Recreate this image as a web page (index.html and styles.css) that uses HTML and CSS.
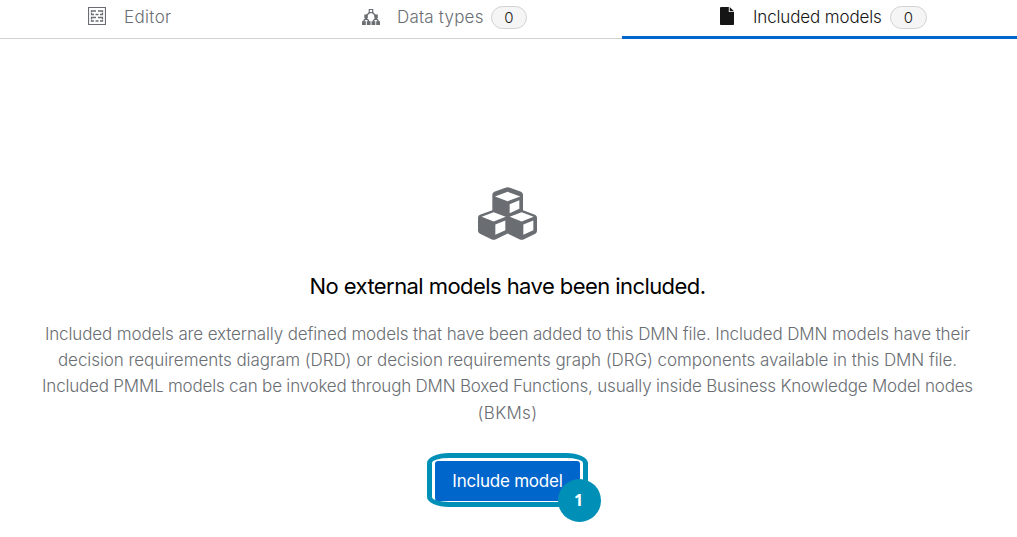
FILE: index.html
```html
<!DOCTYPE html>
<html lang="en">
<head>
<meta charset="utf-8">
<title>Included models</title>
<link rel="stylesheet" href="styles.css">
</head>
<body>
<nav class="tabs">
  <a class="tab tab-editor">
    <svg class="icon" width="18" height="18" viewBox="0 0 18 18" fill="none" stroke="#6a6e73"><path d="M.5.5h17v17H.5z" stroke-width="1.2"/><path d="M3.500 5.500v-1.500H8M10 4h4.500v1.500M3.500 6v1.500H6M7.500 7.500h3M12 7.500h2.500V6M3.500 12v-1.500H8M10 10.500h4.500V12M3.500 12.500V14H6M7.500 14h3M12 14h2.500v-1.500" stroke-width="1.300"/></svg>
    <span class="label">Editor</span>
  </a>
  <a class="tab tab-types">
    <svg class="icon" width="18" height="16" viewBox="0 0 18 16"><path d="M7.500 3.500 4 7v2M10.500 3.500 14 7v2M2 13v-1.500L4 9l2.500 2.500V13M11.500 13v-1.500L14 9l2 2.500V13" fill="none" stroke="#6a6e73" stroke-width="1.400"/><path d="M7.300.5h3.400v3.200H7.300z" fill="#fff" stroke="#6a6e73" stroke-width="1.200"/><path d="M2.300 5.500h3.500v3.500H2.300zM12.300 5.500h3.500v3.500h-3.500zM0 12.200h3.800V16H0zM4.800 12.200h3.800V16H4.800zM9.500 12.200h3.800V16H9.500zM14.200 12.200H18V16h-3.800z" fill="#6a6e73"/></svg>
    <span class="label">Data types</span><span class="badge">0</span>
  </a>
  <a class="tab tab-models">
    <svg class="icon" width="14" height="18" viewBox="0 0 14 18" fill="#151515"><path d="M1 0h7.800v5H14v12.200a.8.8 0 0 1-.8.8H.8a.8.8 0 0 1-.8-.8V1a1 1 0 0 1 1-1zM9.700 0 14 4.200H9.700z"/></svg>
    <span class="label">Included models</span><span class="badge">0</span>
  </a>
</nav>
<main class="empty">
  <svg class="cubes" width="59" height="53" viewBox="39 37 177 158"><path fill="#6a6e73" d="M121 39q7-3 14 0l33 12q6 3 6 9v46l36 14q6 3 6 8v40q0 6-5 9l-34 16q-7 3-14 0l-35-17-35 17q-7 3-14 0l-34-16q-6-3-6-9v-40q0-6 6-8l37-14V60q0-6 6-9z"/><path fill="#fff" d="m90 65 38-14 38 14-38 14zM134 88l29-12v26l-29 13zM50 126l36-14 36 14-36 14zM91 149l30-12v29l-30 14zM134 126l36-14 36 14-36 14zM175 149l30-12v29l-30 14z"/></svg>
  <h1 class="title">No external models have been included.</h1>
  <p class="body">
    <span class="line l1">Included models are externally defined models that have been added to this DMN file. Included DMN models have their</span>
    <span class="line l2">decision requirements diagram (DRD) or decision requirements graph (DRG) components available in this DMN file.</span>
    <span class="line l3">Included PMML models can be invoked through DMN Boxed Functions, usually inside Business Knowledge Model nodes</span>
    <span class="line l4">(BKMs)</span>
  </p>
  <div class="callout">
    <button class="primary">Include model</button>
    <span class="marker">1</span>
  </div>
</main>
</body>
</html>
```
FILE: styles.css
```css
* { box-sizing: border-box; }
body { margin: 0; width: 1017px; height: 537px; overflow: hidden; background: #fff; color: #6a6e73; font: 300 17px "Inter", sans-serif; }
.tabs { display: flex; height: 39px; border-bottom: 1px solid #d2d2d2; }
.tab { display: flex; align-items: center; height: 39px; padding-bottom: 6px; white-space: nowrap; }
.icon { flex: none; }
.tab-editor { width: 227px; padding-left: 88px; }
.tab-editor .icon { position: relative; top: -1px; }
.tab-editor .label { margin-left: 18px; letter-spacing: .35px; }
.tab-types { width: 395px; padding-left: 135px; }
.tab-types .label { margin-left: 17px; width: 87px; letter-spacing: .2px; }
.tab-models { width: 395px; padding-left: 98px; border-bottom: 3px solid #06c; color: #151515; padding-bottom: 3px; }
.tab-models .icon { position: relative; top: -1px; }
.tab-models .label { margin-left: 19px; width: 130px; letter-spacing: -.14px; }
.badge { width: 36px; height: 23px; margin-left: 7px; margin-top: 1px; border: 1px solid #d2d2d2; border-radius: 12px; background: #f5f5f5; color: #151515; font-size: 15px; line-height: 22px; text-align: center; }
.tab-models .badge { width: 37px; }
.empty { display: flex; flex-direction: column; align-items: center; padding-top: 148px; }
.cubes { flex: none; margin-right: 2px; }
.title { margin: 31px 0 0; padding-right: 2px; color: #000; font-size: 22px; font-weight: 400; line-height: 30px; letter-spacing: -.57px; white-space: nowrap; }
.body { margin: 20px 0 0; padding-right: 2px; text-align: center; line-height: 26.2px; }
.line { display: block; white-space: nowrap; }
.l1 { letter-spacing: -.13px; }
.l2 { letter-spacing: -.065px; }
.l3 { letter-spacing: -.2px; }
.l4 { letter-spacing: .3px; }
.callout { position: relative; flex: none; width: 161px; height: 54px; margin-top: 27px; margin-right: 2px; padding: 3px; border: 5px solid #008fb7; border-radius: 22px / 10px; }
.primary { display: block; width: 145px; height: 40px; padding: 0; border: 0; border-radius: 3px; background: #06c; color: #fff; font: 400 17px "Inter", sans-serif; letter-spacing: -.22px; }
.marker { position: absolute; left: 126px; top: 21px; width: 43px; height: 43px; padding-right: 2px; border-radius: 50%; background: #008fb7; color: #fff; font: 700 16px/43px "Open Sans", sans-serif; text-align: center; }
```
